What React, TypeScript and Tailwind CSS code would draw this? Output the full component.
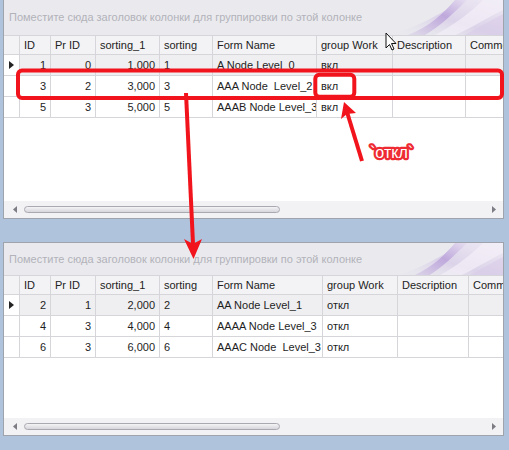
import React from "react";

type Row = { id: string; pr: string; s1: string; s: string; name: string; gw: string; focused?: boolean };

const topRows: Row[] = [
  { id: "1", pr: "0", s1: "1,000", s: "1", name: "A Node Level_0", gw: "вкл", focused: true },
  { id: "3", pr: "2", s1: "3,000", s: "3", name: "AAA Node  Level_2", gw: "вкл" },
  { id: "5", pr: "3", s1: "5,000", s: "5", name: "AAAB Node Level_3", gw: "вкл" },
];

const bottomRows: Row[] = [
  { id: "2", pr: "1", s1: "2,000", s: "2", name: "AA Node Level_1", gw: "откл", focused: true },
  { id: "4", pr: "3", s1: "4,000", s: "4", name: "AAAA Node Level_3", gw: "откл" },
  { id: "6", pr: "3", s1: "6,000", s: "6", name: "AAAC Node  Level_3", gw: "откл" },
];

function Swoosh() {
  return (
    <svg className="absolute right-0 top-0" width="160" height="36" viewBox="0 0 160 36">
      <defs>
        <linearGradient id="sw1" x1="0" y1="1" x2="1" y2="0">
          <stop offset="0" stopColor="#e9e9ee" stopOpacity="0" />
          <stop offset="0.5" stopColor="#d9cfe8" />
          <stop offset="1" stopColor="#efeaf5" />
        </linearGradient>
        <linearGradient id="sw2" x1="0" y1="1" x2="1" y2="0">
          <stop offset="0" stopColor="#c9b8e0" stopOpacity="0.2" />
          <stop offset="0.6" stopColor="#bfa9dc" />
          <stop offset="1" stopColor="#e6def0" />
        </linearGradient>
      </defs>
      <path d="M40 36 C70 30 95 15 120 0 L160 0 L160 36 Z" fill="url(#sw1)" opacity="0.85" />
      <path d="M62 36 C85 28 100 14 112 0 L124 0 C110 14 95 28 80 36 Z" fill="url(#sw2)" />
      <path d="M90 36 C110 26 128 12 140 0 L160 0 L160 10 C140 20 125 30 110 36 Z" fill="#f3eff8" opacity="0.7" />
      <path d="M120 36 C135 28 148 20 160 14 L160 36 Z" fill="#d8cce8" opacity="0.6" />
    </svg>
  );
}

function Cell({ w, right, children, last }: { w?: string; right?: boolean; children?: React.ReactNode; last?: boolean }) {
  return (
    <div
      className={
        (w ? w + " shrink-0 " : "flex-1 min-w-0 ") +
        (last ? "" : "border-r border-[#d6d6da] ") +
        (right ? "justify-end pr-[4px] " : "pl-[4px] ") +
        "flex items-center overflow-hidden whitespace-pre h-full"
      }
    >
      {children}
    </div>
  );
}

function Grid({ rows, widths, groupH }: { rows: Row[]; widths: string[]; groupH: string }) {
  const [wFN, wGW, wD] = widths;
  return (
    <div className="flex flex-col h-full">
      <div className={"relative bg-[#eaeaee] overflow-hidden shrink-0 flex items-center pl-[5px] text-[#b2b2ba] " + groupH}>
        <Swoosh />
        <span className="relative">Поместите сюда заголовок колонки для группировки по этой колонке</span>
      </div>
      <div className="flex h-[20px] bg-[#f3f3f5] border-y border-[#d6d6da] text-[#222] shrink-0">
        <Cell w="w-[16px]" />
        <Cell w="w-[31px]">ID</Cell>
        <Cell w="w-[45px]">Pr ID</Cell>
        <Cell w="w-[64px]">sorting_1</Cell>
        <Cell w="w-[53px]">sorting</Cell>
        <Cell w={wFN}>Form Name</Cell>
        <Cell w={wGW}>group Work</Cell>
        <Cell w={wD}>Description</Cell>
        <Cell last>Comment</Cell>
      </div>
      {rows.map((r, i) => (
        <div
          key={i}
          className={"flex h-[21px] border-b border-[#d6d6da] text-[#1e1e1e] shrink-0 " + (r.focused ? "bg-[#efeff1]" : "bg-white")}
        >
          <div className="w-[16px] shrink-0 border-r border-[#d6d6da] flex items-center justify-center bg-white">
            {r.focused && (
              <svg width="5" height="8" viewBox="0 0 5 8">
                <path d="M0 0 L5 4 L0 8 Z" fill="#222" />
              </svg>
            )}
          </div>
          <Cell w="w-[31px]" right>{r.id}</Cell>
          <Cell w="w-[45px]" right>{r.pr}</Cell>
          <Cell w="w-[64px]" right>{r.s1}</Cell>
          <Cell w="w-[53px]">{r.s}</Cell>
          <Cell w={wFN}>{r.name}</Cell>
          <Cell w={wGW}>{r.gw}</Cell>
          <Cell w={wD} />
          <Cell last />
        </div>
      ))}
      <div className="flex-1 bg-white" />
      <div className="h-[17px] bg-[#f2f2f4] flex items-center shrink-0 pl-[9px] pr-[7px]">
        <svg width="4" height="7" viewBox="0 0 4 7">
          <path d="M4 0 L0 3.5 L4 7 Z" fill="#7c7c84" />
        </svg>
        <div className="ml-[7px] w-[256px] h-[7px] rounded-full border border-[#a9a9b1] bg-gradient-to-b from-[#f4f4f6] to-[#d6d6dc]" />
        <div className="flex-1" />
        <svg width="4" height="7" viewBox="0 0 4 7">
          <path d="M0 0 L4 3.5 L0 7 Z" fill="#7c7c84" />
        </svg>
      </div>
    </div>
  );
}

export default function App() {
  return (
    <div className="relative w-[509px] h-[450px] bg-[#b0c3dd] overflow-hidden font-['Liberation_Sans',Arial,sans-serif] text-[11px]">
      <div className="flex flex-col pl-[3px]">
        <div className="w-[501px] h-[219px] border-x border-b border-[#9fa3ab] bg-white">
          <Grid rows={topRows} widths={["w-[104px]", "w-[76px]", "w-[73px]"]} groupH="h-[35px]" />
        </div>
        <div className="mt-[23px] w-[501px] h-[194px] border border-[#9fa3ab] bg-white">
          <Grid rows={bottomRows} widths={["w-[110px]", "w-[75px]", "w-[71px]"]} groupH="h-[32px]" />
        </div>
      </div>

      <svg className="absolute inset-0 pointer-events-none" width="509" height="450" viewBox="0 0 509 450">
        <rect x="18" y="70.5" width="484" height="27.5" rx="4" fill="none" stroke="#f2141c" strokeWidth="4" />
        <rect x="315.3" y="74.8" width="39" height="22" rx="4" fill="none" stroke="#f2141c" strokeWidth="4" />
        <line x1="362" y1="161" x2="347" y2="112" stroke="#f2141c" strokeWidth="4" />
        <path d="M344 102 L341 119 L347 114 L356 113 Z" fill="#f2141c" />
        <line x1="186" y1="93" x2="193" y2="244" stroke="#f2141c" strokeWidth="4" />
        <path d="M184 239 L193.5 259 L202 239 L193 244 Z" fill="#f2141c" />
        <text
          x="370"
          y="158"
          fontFamily="Liberation Sans, Arial, sans-serif"
          fontSize="16"
          fill="#ffffff"
          stroke="#ee2a32"
          strokeWidth="4.5"
          strokeLinejoin="round"
          paintOrder="stroke"
        >
          `откл`
        </text>
        <path
          d="M386 33 L386 48 L389.5 44.5 L392 50 L394 49 L391.5 43.5 L396 43.5 Z"
          fill="#ffffff"
          stroke="#111"
          strokeWidth="1"
          strokeLinejoin="round"
        />
      </svg>
    </div>
  );
}
